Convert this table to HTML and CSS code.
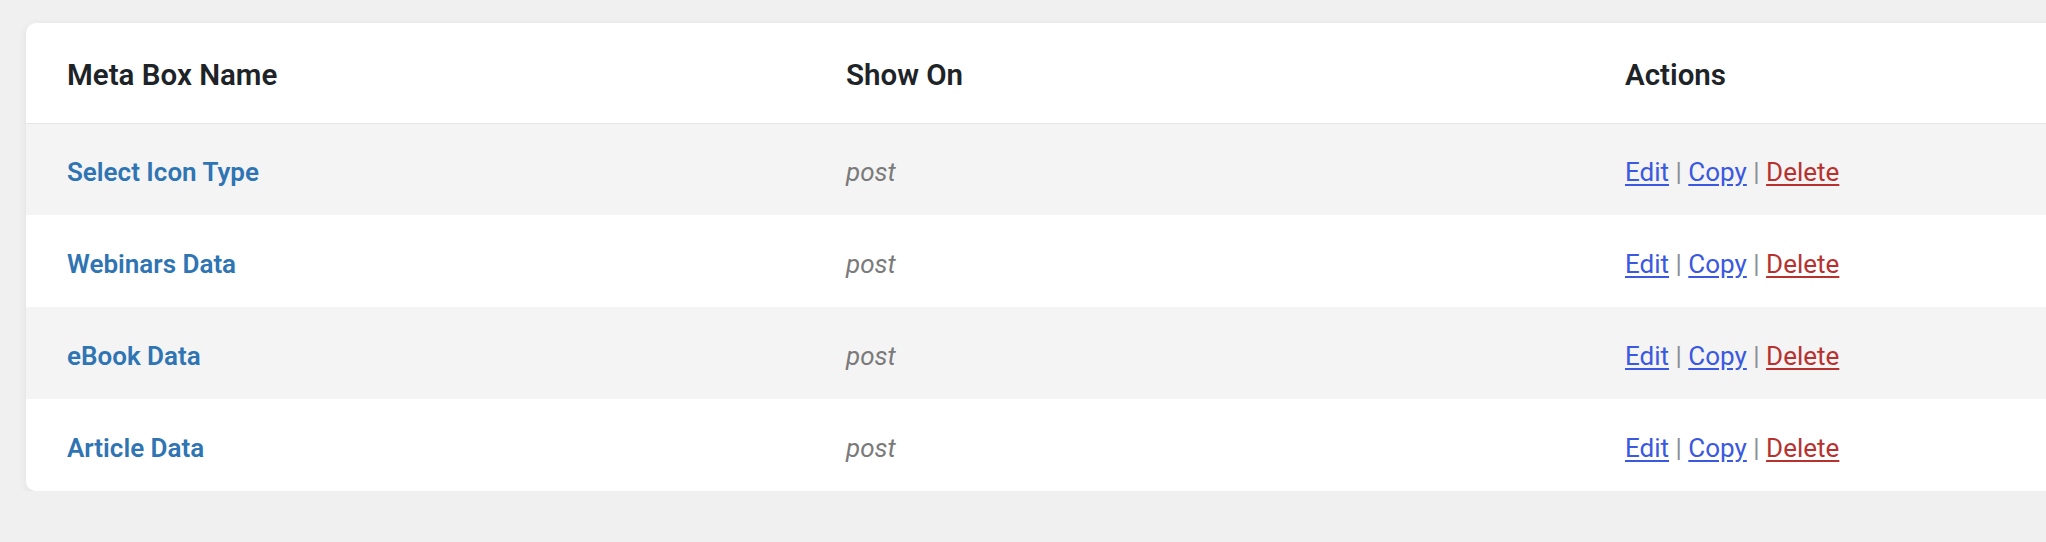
FILE: index.html
```html
<!DOCTYPE html>
<html lang="en">
<head>
<meta charset="utf-8">
<title>Meta Boxes</title>
<link rel="stylesheet" href="styles.css">
</head>
<body>
<div class="page">
  <div class="card">
    <table class="mb-table">
      <thead>
        <tr>
          <th>Meta Box Name</th>
          <th>Show On</th>
          <th>Actions</th>
        </tr>
      </thead>
      <tbody>
        <tr>
          <td><a class="name" href="#">Select Icon Type</a></td>
          <td><span class="post">post</span></td>
          <td class="actions"><a class="act" href="#">Edit</a> <span class="sep">|</span> <a class="act" href="#">Copy</a> <span class="sep">|</span> <a class="act del" href="#">Delete</a></td>
        </tr>
        <tr>
          <td><a class="name" href="#">Webinars Data</a></td>
          <td><span class="post">post</span></td>
          <td class="actions"><a class="act" href="#">Edit</a> <span class="sep">|</span> <a class="act" href="#">Copy</a> <span class="sep">|</span> <a class="act del" href="#">Delete</a></td>
        </tr>
        <tr>
          <td><a class="name" href="#">eBook Data</a></td>
          <td><span class="post">post</span></td>
          <td class="actions"><a class="act" href="#">Edit</a> <span class="sep">|</span> <a class="act" href="#">Copy</a> <span class="sep">|</span> <a class="act del" href="#">Delete</a></td>
        </tr>
        <tr>
          <td><a class="name" href="#">Article Data</a></td>
          <td><span class="post">post</span></td>
          <td class="actions"><a class="act" href="#">Edit</a> <span class="sep">|</span> <a class="act" href="#">Copy</a> <span class="sep">|</span> <a class="act del" href="#">Delete</a></td>
        </tr>
      </tbody>
    </table>
  </div>
</div>
</body>
</html>
```
FILE: styles.css
```css
html, body {
  margin: 0;
  padding: 0;
  background: #f0f0f0;
  overflow: hidden;
}
body {
  font-family: Roboto, "Liberation Sans", sans-serif;
  color: #1d2327;
}
.page {
  padding: 23px 0 0 26px;
  width: 2400px;
}
.card {
  width: 2337px;
  background: #ffffff;
  border-radius: 10px;
  box-shadow: 0 2px 8px rgba(0, 0, 0, 0.07);
  overflow: hidden;
}
.mb-table {
  width: 100%;
  border-collapse: collapse;
  table-layout: fixed;
}
.mb-table th {
  height: 100px;
  padding: 4px 0 0 41px;
  text-align: left;
  font-size: 29.5px;
  font-weight: 600;
  color: #1d2327;
  border-bottom: 1px solid #e6e6e6;
  box-sizing: border-box;
  vertical-align: middle;
}
.mb-table td {
  height: 92px;
  padding: 5px 0 0 41px;
  font-size: 26px;
  vertical-align: middle;
  box-sizing: border-box;
}
.mb-table tbody tr:nth-child(odd) {
  background: #f4f4f4;
}
.mb-table tbody tr:nth-child(even) {
  background: #ffffff;
}
.name {
  color: #2f74b3;
  font-weight: 600;
  text-decoration: none;
}
.post {
  color: #7a7a7a;
  font-style: italic;
}
.act {
  color: #3a58e0;
  text-decoration: underline;
  text-underline-offset: 3px;
}
.act.del {
  color: #b7322f;
}
.sep {
  color: #8c8f94;
}
```
